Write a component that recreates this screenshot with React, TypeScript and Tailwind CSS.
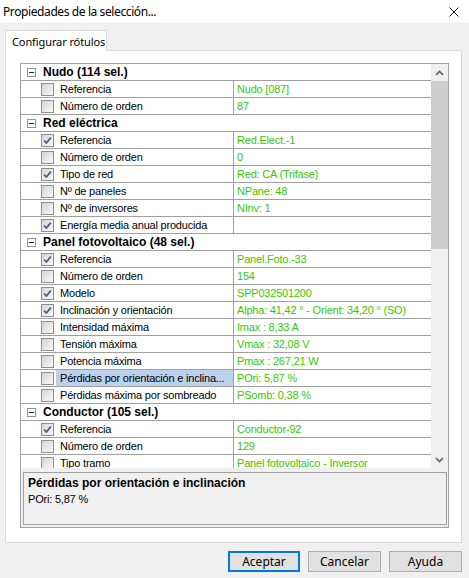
import React from "react";

type Row =
  | { type: "cat"; label: string }
  | { type: "prop"; label: string; checked: boolean; value: string; selected?: boolean };

const rows: Row[] = [
  { type: "cat", label: "Nudo (114 sel.)" },
  { type: "prop", label: "Referencia", checked: false, value: "Nudo [087]" },
  { type: "prop", label: "Número de orden", checked: false, value: "87" },
  { type: "cat", label: "Red eléctrica" },
  { type: "prop", label: "Referencia", checked: true, value: "Red.Elect.-1" },
  { type: "prop", label: "Número de orden", checked: false, value: "0" },
  { type: "prop", label: "Tipo de red", checked: true, value: "Red: CA (Trifase)" },
  { type: "prop", label: "Nº de paneles", checked: false, value: "NPane: 48" },
  { type: "prop", label: "Nº de inversores", checked: false, value: "NInv: 1" },
  { type: "prop", label: "Energía media anual producida", checked: true, value: "" },
  { type: "cat", label: "Panel fotovoltaico (48 sel.)" },
  { type: "prop", label: "Referencia", checked: true, value: "Panel.Foto.-33" },
  { type: "prop", label: "Número de orden", checked: false, value: "154" },
  { type: "prop", label: "Modelo", checked: true, value: "SPP032501200" },
  { type: "prop", label: "Inclinación y orientación", checked: true, value: "Alpha: 41,42 ° - Orient: 34,20 ° (SO)" },
  { type: "prop", label: "Intensidad máxima", checked: false, value: "Imax : 8,33 A" },
  { type: "prop", label: "Tensión máxima", checked: false, value: "Vmax : 32,08 V" },
  { type: "prop", label: "Potencia máxima", checked: false, value: "Pmax : 267,21 W" },
  { type: "prop", label: "Pérdidas por orientación e inclina...", checked: false, value: "POri: 5,87 %", selected: true },
  { type: "prop", label: "Pérdidas máxima por sombreado", checked: false, value: "PSomb: 0,38 %" },
  { type: "cat", label: "Conductor (105 sel.)" },
  { type: "prop", label: "Referencia", checked: true, value: "Conductor-92" },
  { type: "prop", label: "Número de orden", checked: false, value: "129" },
  { type: "prop", label: "Tipo tramo", checked: false, value: "Panel fotovoltaico - Inversor" },
];

function CheckBox({ checked }: { checked: boolean }) {
  return (
    <div className="relative w-[13px] h-[13px] shrink-0 border border-[#8e8f8f] bg-gradient-to-br from-[#d6d6d6] to-[#f8f8f8]">
      {checked && (
        <svg className="absolute left-0 top-0" width="11" height="11" viewBox="0 0 11 11">
          <path d="M2.2 5.6 L4.4 8 L8.8 2.6" fill="none" stroke="#4a5d82" strokeWidth="1.7" />
        </svg>
      )}
    </div>
  );
}

function Minus() {
  return (
    <div className="w-[9px] h-[9px] shrink-0 border border-[#919191] bg-white flex items-center justify-center">
      <div className="w-[5px] h-px bg-[#222]" />
    </div>
  );
}

export default function App() {
  return (
    <div className="w-[469px] h-[578px] bg-[#f0f0f0] flex flex-col overflow-hidden" style={{ fontFamily: '"Noto Sans", sans-serif' }}>
      {/* title bar */}
      <div className="h-[23px] bg-white flex items-center justify-between pl-[3px] pr-[10px] shrink-0">
        <span className="text-[12px] text-black leading-none tracking-[-0.4px] whitespace-nowrap">Propiedades de la selección...</span>
        <svg width="10" height="10" viewBox="0 0 10 10">
          <path d="M0.5 0.5 L9.5 9.5 M9.5 0.5 L0.5 9.5" stroke="#111" strokeWidth="1" />
        </svg>
      </div>

      <div className="flex flex-col pl-[5px] pr-[8px] pt-[7px]">
        {/* tab */}
        <div className="flex">
          <div className="relative z-10 h-[21px] w-[102px] bg-white border border-b-0 border-[#d9d9d9] flex items-center pl-[6px] -mb-px">
            <span className="text-[11px] text-black leading-none tracking-[-0.1px] whitespace-nowrap">Configurar rótulos</span>
          </div>
        </div>
        {/* tab panel */}
        <div className="h-[493px] w-[457px] bg-white border border-[#d9d9d9] pl-[14px] pt-[12px]">
          {/* property grid */}
          <div
            className="w-[429px] h-[465px] border border-[#a0a0a0] bg-[#f0f0f0] flex flex-col"
            style={{ fontFamily: '"Liberation Sans", Arial, sans-serif' }}
          >
            <div className="flex h-[404px] shrink-0">
              <div className="w-[410px] h-[404px] overflow-hidden bg-white">
                {rows.map((r, i) =>
                  r.type === "cat" ? (
                    <div key={i} className="h-[17px] border-b border-[#a0a0a0] flex items-center pl-[6px]">
                      <Minus />
                      <span className="ml-[7px] text-[12px] font-bold text-black leading-none">{r.label}</span>
                    </div>
                  ) : (
                    <div key={i} className="h-[17px] border-b border-[#a0a0a0] flex">
                      <div className="w-[213px] shrink-0 border-r border-[#a0a0a0] flex items-center pl-[20px]">
                        <CheckBox checked={r.checked} />
                        <div
                          className={
                            "ml-[2px] h-[16px] flex-1 flex items-center pl-[4px] " +
                            (r.selected ? "bg-[#bcd1ec]" : "")
                          }
                        >
                          <span className="text-[11px] text-black leading-none tracking-[-0.2px] whitespace-nowrap">
                            {r.label}
                          </span>
                        </div>
                      </div>
                      <div className="flex-1 flex items-center pl-[3px]">
                        <span className="text-[11px] text-[#38c800] leading-none tracking-[-0.2px] whitespace-nowrap">
                          {r.value}
                        </span>
                      </div>
                    </div>
                  )
                )}
              </div>
              {/* scrollbar */}
              <div className="w-[17px] h-[404px] bg-[#f0f0f0] flex flex-col">
                <div className="h-[17px] flex items-center justify-center shrink-0">
                  <svg width="9" height="6" viewBox="0 0 9 6">
                    <path d="M1 5 L4.5 1.5 L8 5" fill="none" stroke="#606060" strokeWidth="1.6" />
                  </svg>
                </div>
                <div className="h-[168px] bg-[#cdcdcd] shrink-0" />
                <div className="flex-1" />
                <div className="h-[17px] flex items-center justify-center shrink-0">
                  <svg width="9" height="6" viewBox="0 0 9 6">
                    <path d="M1 1 L4.5 4.5 L8 1" fill="none" stroke="#606060" strokeWidth="1.6" />
                  </svg>
                </div>
              </div>
            </div>
            {/* description */}
            <div className="mt-[4px] ml-[2px] mr-[1px] h-[53px] border border-[#a0a0a0] bg-[#f0f0f0] pl-[4px] pt-[4px] flex flex-col gap-[3px]">
              <span className="text-[12px] font-bold text-black leading-[13px]">Pérdidas por orientación e inclinación</span>
              <span className="text-[11px] text-black leading-[13px] tracking-[-0.2px]">POri: 5,87 %</span>
            </div>
          </div>
        </div>
      </div>

      {/* buttons */}
      <div className="flex justify-end gap-[8px] pr-[7px] pt-[8px]">
        <button className="w-[72px] h-[21px] bg-[#e1e1e1] border-2 border-[#0078d7] text-[12px] text-black leading-none flex items-center justify-center">
          Aceptar
        </button>
        <button className="w-[73px] h-[21px] bg-[#e1e1e1] border border-[#adadad] text-[12px] text-black leading-none flex items-center justify-center">
          Cancelar
        </button>
        <button className="w-[73px] h-[21px] bg-[#e1e1e1] border border-[#adadad] text-[12px] text-black leading-none flex items-center justify-center">
          Ayuda
        </button>
      </div>
    </div>
  );
}
